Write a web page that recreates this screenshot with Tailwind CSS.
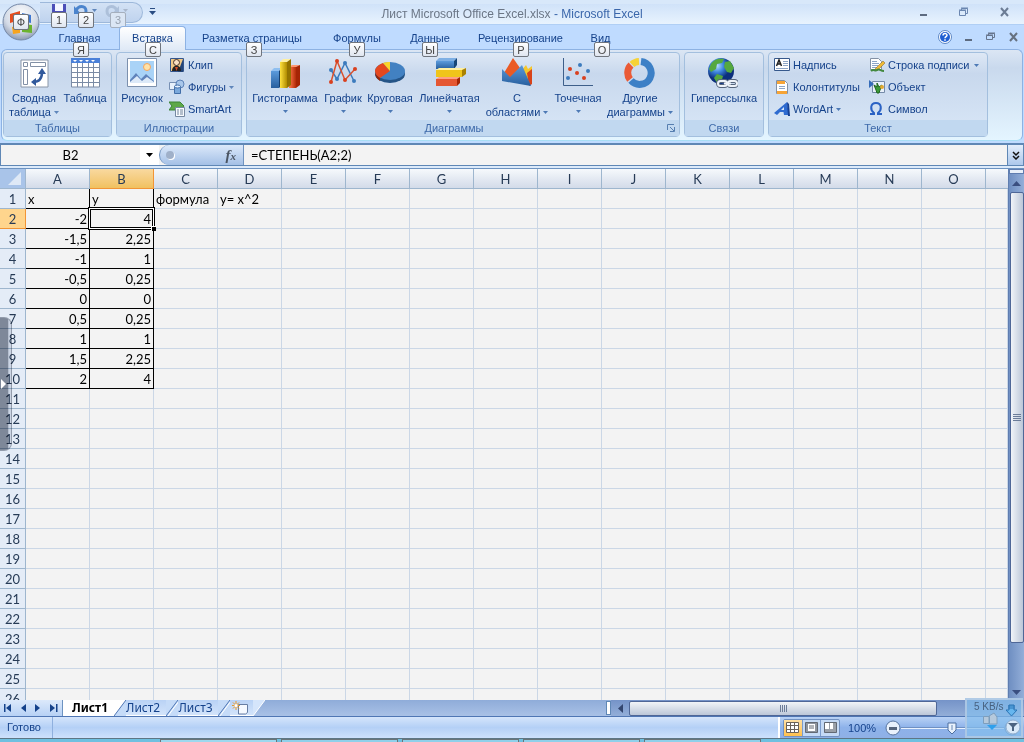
<!DOCTYPE html>
<html lang="ru">
<head>
<meta charset="utf-8">
<title>Лист Microsoft Office Excel.xlsx - Microsoft Excel</title>
<script src="https://cdn.jsdelivr.net/npm/@tailwindcss/browser@4"></script>
</head>
<body class="relative flex h-screen flex-col overflow-hidden bg-[#bfdbff] font-['Liberation_Sans',sans-serif] text-[11px] leading-[14px] text-[#15428b]">

<svg class="absolute h-0 w-0">
  <defs>
    <linearGradient id="blue" x2="1"><stop stop-color="#6aa5dd"/><stop offset="1" stop-color="#244f83"/></linearGradient>
    <linearGradient id="blueV" x2="0" y2="1"><stop stop-color="#5b9bdc"/><stop offset="1" stop-color="#285f9e"/></linearGradient>
    <linearGradient id="yel" x2="1"><stop stop-color="#ffe23f"/><stop offset="1" stop-color="#b08c00"/></linearGradient>
    <linearGradient id="red" x2="1"><stop stop-color="#ff7a4d"/><stop offset="1" stop-color="#b32c09"/></linearGradient>
    <radialGradient id="globe" cx=".35" cy=".3"><stop stop-color="#b8e0ff"/><stop offset=".5" stop-color="#3d86dd"/><stop offset="1" stop-color="#0c2f7d"/></radialGradient>
    <radialGradient id="orb" cx=".5" cy=".3" r=".75"><stop stop-color="#fff"/><stop offset=".6" stop-color="#d3dae6"/><stop offset="1" stop-color="#7f8ea8"/></radialGradient>
  </defs>
</svg>

<!-- Title bar -->
<header class="relative flex h-[25px] shrink-0 items-center border-b border-[#b0cff5] bg-linear-to-b from-[#cbdff8] to-[#e8f3fe] shadow-[inset_0_4px_0_#d8e8fa]">
  <nav class="relative ml-10 mb-px flex h-[21px] w-[103px] items-center self-end rounded-r-full border border-l-0 border-[#9db8da] bg-linear-to-b from-[#d3e2f5] to-[#bfd3ee]">
    <button aria-label="Сохранить" class="ml-3 mb-1"><svg width="14" height="14"><path d="M0 0h14v14H0z" fill="#4c4fb8"/><path d="M3 0h8v7H3z" fill="#f4f6ff"/><path d="M3 9h8v5H3z" fill="#cfd5ef"/></svg></button>
    <button aria-label="Отменить" class="ml-2 mb-1 flex items-center gap-1"><svg width="14" height="13"><path d="M2 7C4 1 12 1 12 7c0 3-2 5-4 5" fill="none" stroke="#4b84cd" stroke-width="3"/><path d="M0 2v8h7z" fill="#4b84cd"/></svg><svg width="5" height="3"><path d="M0 0h5L2.500 3z" fill="#5f86bb"/></svg></button>
    <button aria-label="Вернуть" class="ml-2 mb-1 flex items-center gap-1"><svg width="14" height="13"><path d="M12 7C10 1 2 1 2 7c0 3 2 5 4 5" fill="none" stroke="#adc0da" stroke-width="3"/><path d="M14 2v8H7z" fill="#adc0da"/></svg><svg width="5" height="3"><path d="M0 0h5L2.500 3z" fill="#aab8cc"/></svg></button>
    <kbd class="absolute left-[11px] top-[9px] h-4 w-4 rounded-xs border border-[#70757d] bg-linear-to-b from-white to-[#e0e6f0] text-center font-['Liberation_Sans'] text-[11px] leading-[15px] text-[#444]">1</kbd>
    <kbd class="absolute left-[38px] top-[9px] h-4 w-4 rounded-xs border border-[#70757d] bg-linear-to-b from-white to-[#e0e6f0] text-center font-['Liberation_Sans'] text-[11px] leading-[15px] text-[#444]">2</kbd>
    <kbd class="absolute left-[70px] top-[9px] h-4 w-4 rounded-xs border border-[#a5afbd] bg-[#dbe6f4] text-center font-['Liberation_Sans'] text-[11px] leading-[15px] text-[#98a2b0]">3</kbd>
  </nav>
  <button aria-label="Настройка панели быстрого доступа" class="ml-[6px]"><svg width="7" height="8"><path d="M1 0h5v1H1zM0 3h7L3.500 7z" fill="#2a4d83"/></svg></button>
  <h1 class="absolute inset-x-0 top-[6px] text-center text-[12px] leading-4 text-[#3a66aa]"><span class="text-[#6b7686]">Лист Microsoft Office Excel.xlsx</span> - Microsoft Excel</h1>
  <div class="ml-auto mr-[15px] flex items-center gap-[31px] text-[#5d6b80]">
    <button aria-label="Свернуть"><svg width="8" height="10"><path d="M0 7h7v2H0z" fill="currentColor"/></svg></button>
    <button aria-label="Восстановить"><svg width="10" height="10" fill="none" stroke="#6b86b0"><path d="M.500 3.500h6v5h-6zM2.500 3V1.500h6v5H7M0 3h7M2 1h7"/></svg></button>
    <button aria-label="Закрыть"><svg width="9" height="10"><path d="M1 1l7 8M8 1L1 9" stroke="#6b7c95" stroke-width="2"/></svg></button>
  </div>
</header>

<!-- Ribbon tabs -->
<div class="flex h-6 shrink-0 items-stretch">
  <nav class="flex pl-10 text-center leading-[27px]">
    <a href="#" class="relative w-[79px]">Главная<kbd class="absolute left-[33px] top-[17px] z-20 h-[15px] w-4 rounded-xs border border-[#70757d] bg-linear-to-b from-white to-[#e0e6f0] font-['Liberation_Sans'] text-[11px] leading-[14px] text-[#444]">Я</kbd></a>
    <a href="#" class="relative top-px z-10 w-[67px] rounded-t-sm border border-b-0 border-[#8db2e3] bg-linear-to-b from-white to-[#dfe9f6] leading-[23px]">Вставка<kbd class="absolute left-[25px] top-[15px] z-20 h-[15px] w-4 rounded-xs border border-[#70757d] bg-linear-to-b from-white to-[#e0e6f0] font-['Liberation_Sans'] text-[11px] leading-[14px] text-[#444]">С</kbd></a>
    <a href="#" class="relative w-[132px]">Разметка страницы<kbd class="absolute left-[60px] top-[17px] z-20 h-[15px] w-4 rounded-xs border border-[#70757d] bg-linear-to-b from-white to-[#e0e6f0] font-['Liberation_Sans'] text-[11px] leading-[14px] text-[#444]">З</kbd></a>
    <a href="#" class="relative w-[78px]">Формулы<kbd class="absolute left-[31px] top-[17px] z-20 h-[15px] w-4 rounded-xs border border-[#70757d] bg-linear-to-b from-white to-[#e0e6f0] font-['Liberation_Sans'] text-[11px] leading-[14px] text-[#444]">У</kbd></a>
    <a href="#" class="relative w-[68px]">Данные<kbd class="absolute left-[26px] top-[17px] z-20 h-[15px] w-4 rounded-xs border border-[#70757d] bg-linear-to-b from-white to-[#e0e6f0] font-['Liberation_Sans'] text-[11px] leading-[14px] text-[#444]">Ы</kbd></a>
    <a href="#" class="relative w-[113px]">Рецензирование<kbd class="absolute left-[49px] top-[17px] z-20 h-[15px] w-4 rounded-xs border border-[#70757d] bg-linear-to-b from-white to-[#e0e6f0] font-['Liberation_Sans'] text-[11px] leading-[14px] text-[#444]">Р</kbd></a>
    <a href="#" class="relative w-[47px]">Вид<kbd class="absolute left-[17px] top-[17px] z-20 h-[15px] w-4 rounded-xs border border-[#70757d] bg-linear-to-b from-white to-[#e0e6f0] font-['Liberation_Sans'] text-[11px] leading-[14px] text-[#444]">О</kbd></a>
  </nav>
  <div class="ml-auto mr-[6px] flex items-center gap-[13px]">
    <button aria-label="Справка"><svg width="14" height="14"><circle cx="7" cy="7" r="6.500" fill="#fff" stroke="#5c86c4"/><circle cx="7" cy="7" r="5" fill="#1f5fd2"/><path d="M5 5.500c0-2.500 4-2.500 4-.2C9 6.700 7 6.700 7 8.300M7 9.300v1.500" fill="none" stroke="#fff" stroke-width="1.500"/></svg></button>
    <button aria-label="Свернуть окно"><svg width="8" height="10"><path d="M0 7h7v2H0z" fill="#5d6b80"/></svg></button>
    <button aria-label="Восстановить окно"><svg width="10" height="10" fill="none" stroke="#66758c"><path d="M.500 3.500h6v4h-6zM2.500 3V1.500h6v4H7M0 3h7M2 1h7"/></svg></button>
    <button aria-label="Закрыть окно"><svg width="9" height="10"><path d="M1 1l7 8M8 1L1 9" stroke="#66717f" stroke-width="2"/></svg></button>
  </div>
</div>

<!-- Ribbon -->
<section class="mx-px flex h-[92px] shrink-0 gap-1 rounded-md border border-[#8db2e3] border-b-[#a7def5] bg-linear-to-b from-[#dbe6f4] from-0% via-[#c9d9ed] via-20% to-[#e4f5ff] px-px pb-[3px] pt-[2px]">
  <fieldset class="flex w-[109px] flex-col rounded-sm border border-[#a3bfde] bg-linear-to-b from-[#dee8f5] from-0% via-[#c8d8ed] via-25% to-[#d9e7f7]">
    <div class="flex min-h-0 flex-1 pt-[2px]">
      <button class="flex w-[60px] flex-col items-center"><svg class="shrink-0" width="32" height="36" viewBox="0 0 32 36"><path d="M3 5h27v27H3z" fill="#fff" stroke="#8996a8"/><path d="M5.500 7.500h4v4h-4zM12.500 7.500h15v4h-15zM5.500 14.500h4v15h-4z" fill="#fff" stroke="#8290a5"/><path d="M15 27c6 0 9-3 9-10" fill="none" stroke="#31599c" stroke-width="2.500"/><path d="M13 27l5-4v8zM24 13l-4 6h8z" fill="#31599c"/></svg><span>Сводная</span><span class="flex items-center gap-[3px]">таблица<svg width="5" height="3"><path d="M0 0h5L2.500 3z" fill="#5f86bb"/></svg></span></button>
      <button class="flex w-[42px] flex-col items-center"><svg class="shrink-0" width="32" height="36" viewBox="0 0 32 36"><path d="M2 3h29v29H2z" fill="#fff"/><path d="M2 3h29v5H2z" fill="#4a80d8"/><path d="M4 5h4l-2 2zM10 5h4l-2 2zM16 5h4l-2 2zM22 5h4l-2 2z" fill="#fff"/><path d="M2.500 8v24h28V8M2 12.500h29M2 17.500h29M2 22.500h29M2 27.500h29M8.500 8v24M13.500 8v24M19.500 8v24M24.500 8v24" fill="none" stroke="#7a8ba5"/></svg><span>Таблица</span></button>
    </div>
    <div class="h-4 shrink-0 bg-[#c1d8f0] text-center leading-[17px] text-[#3e6aaa]">Таблицы</div>
  </fieldset>
  <fieldset class="flex w-[126px] flex-col rounded-sm border border-[#a3bfde] bg-linear-to-b from-[#dee8f5] from-0% via-[#c8d8ed] via-25% to-[#d9e7f7]">
    <div class="flex min-h-0 flex-1">
      <button class="flex w-[50px] flex-col items-center pt-[2px]"><svg class="shrink-0" width="32" height="36" viewBox="0 0 32 36"><path d="M1.500 3.500h29v28h-29z" fill="#fff" stroke="#7c90ad"/><path d="M4 6h24v21H4z" fill="#a9d3f7"/><circle cx="21" cy="12" r="3.500" fill="#ffe2a8" stroke="#f3a65e"/><path d="M4 25l6-7 5 6 5-5 8 7v2H4z" fill="#5f83bb"/><path d="M4 27l7-6 5 5 5-4 7 5v1H4z" fill="#dce9f8"/></svg><span>Рисунок</span></button>
      <div class="flex flex-col pl-[2px] pt-px">
        <button class="flex h-[22px] items-center gap-[3px]"><svg width="16" height="16"><path d="M1.500 1.500h13v13h-13z" fill="#f0c988" stroke="#34568e"/><path d="M14 2v13H9z" fill="#244579"/><circle cx="7.500" cy="5.500" r="3" fill="#fbe0c2" stroke="#473027"/><path d="M3 14c0-7 9-7 9 0z" fill="#232323"/><path d="M6 10h3l-1.500 4z" fill="#d84d28"/></svg>Клип</button>
        <button class="flex h-[22px] items-center gap-[3px]"><svg width="16" height="16"><path d="M.500 3.500h8v7h-8z" fill="#e8f1fb" stroke="#7790b4"/><circle cx="11" cy="5" r="4" fill="#a9c7ea" stroke="#5d83b8"/><path d="M5.500 7.500h6v7h-6z" fill="#7ba9dc" stroke="#426ea8"/><ellipse cx="8.500" cy="7.500" rx="3" ry="1.500" fill="#e3f0ff" stroke="#426ea8"/></svg>Фигуры<svg width="5" height="3"><path d="M0 0h5L2.500 3z" fill="#5f86bb"/></svg></button>
        <button class="flex h-[22px] items-center gap-[3px]"><svg width="16" height="16"><path d="M0 1h11l4 4-3 4H0l3-4z" fill="#5ea849" stroke="#3c8438"/><path d="M6.500 6.500h9v9h-9z" fill="#f8fafd" stroke="#7688a1"/><path d="M8 9h2M11 9h3M8 11h2M11 11h3M8 13h2M11 13h3" stroke="#71849d"/></svg>SmartArt</button>
      </div>
    </div>
    <div class="h-4 shrink-0 bg-[#c1d8f0] text-center leading-[17px] text-[#3e6aaa]">Иллюстрации</div>
  </fieldset>
  <fieldset class="relative flex w-[434px] flex-col rounded-sm border border-[#a3bfde] bg-linear-to-b from-[#dee8f5] from-0% via-[#c8d8ed] via-25% to-[#d9e7f7]">
    <div class="flex min-h-0 flex-1 pl-[2px] pt-[2px]">
      <button class="flex w-[72px] flex-col items-center"><svg class="shrink-0" width="32" height="36" viewBox="0 0 32 36"><path d="M2 16h8v17H2z" fill="url(#blueV)"/><path d="M2 16l3-3h8l-3 3z" fill="#8fbff0"/><path d="M10 16l3-3v17l-3 3z" fill="#17406f"/><path d="M20 12h7v21h-7z" fill="url(#red)"/><path d="M20 12l3-2h8l-4 2z" fill="#ff9570"/><path d="M27 12l4-2v20l-4 3z" fill="#a52505"/><path d="M11 7h7v26h-7z" fill="url(#yel)"/><path d="M11 7l3-3h8l-4 3z" fill="#fff0a0"/><path d="M18 7l4-3v26l-4 3z" fill="#937300"/></svg><span>Гистограмма</span><svg class="mt-[5px]" width="5" height="3"><path d="M0 0h5L2.500 3z" fill="#4d79b5"/></svg></button>
      <button class="flex w-[44px] flex-col items-center"><svg class="shrink-0" width="32" height="36" viewBox="0 0 32 36"><path d="M4 15l6 9 8-16 9 18" fill="none" stroke="#3c7bbd" stroke-width="1.500"/><path d="M4 27l6-21 8 19L28 14" fill="none" stroke="#d9512f" stroke-width="1.500"/><g fill="#3c7bbd"><circle cx="4" cy="15" r="2"/><circle cx="10" cy="24" r="2"/><circle cx="18" cy="8" r="2"/><circle cx="27" cy="26" r="2"/></g><g fill="#d9401f"><circle cx="4" cy="27" r="2"/><circle cx="10" cy="6" r="2"/><circle cx="18" cy="25" r="2"/><circle cx="28" cy="14" r="2"/></g></svg><span>График</span><svg class="mt-[5px]" width="5" height="3"><path d="M0 0h5L2.500 3z" fill="#4d79b5"/></svg></button>
      <button class="flex w-[50px] flex-col items-center"><svg class="shrink-0" width="32" height="36" viewBox="0 0 32 36"><ellipse cx="16" cy="19" rx="15" ry="9" fill="#245487"/><ellipse cx="16" cy="16" rx="15" ry="9" fill="#4281c2"/><path d="M16 16L6 23C3 21 1 19 1 16c0-3 3-6 8-8z" fill="#e5481f"/><path d="M1 16c0 4 1 7 5 10v-3c-4-3-5-4-5-7z" fill="#9b2405"/><path d="M16 16L9 8c2-1 4-1 7-1z" fill="#fbd52b"/></svg><span>Круговая</span><svg class="mt-[5px]" width="5" height="3"><path d="M0 0h5L2.500 3z" fill="#4d79b5"/></svg></button>
      <button class="flex w-[69px] flex-col items-center"><svg class="shrink-0" width="32" height="36" viewBox="0 0 32 36"><path d="M2 6h18v8H2z" fill="url(#blueV)"/><path d="M2 6l3-3h18l-3 3z" fill="#7fb0e4"/><path d="M20 6l3-3v7l-3 4z" fill="#174678"/><path d="M2 24h21v7H2z" fill="#e55732"/><path d="M2 24l3-2h21l-3 2z" fill="#ffa080"/><path d="M23 24l3-2v6l-3 3z" fill="#a32505"/><path d="M2 15h26v7H2z" fill="#f0c51a"/><path d="M2 15l3-2h27l-4 2z" fill="#fff0a0"/><path d="M28 15l4-2v6l-4 3z" fill="#a98100"/></svg><span>Линейчатая</span><svg class="mt-[5px]" width="5" height="3"><path d="M0 0h5L2.500 3z" fill="#4d79b5"/></svg></button>
      <button class="flex w-[66px] flex-col items-center"><svg class="shrink-0" width="32" height="36" viewBox="0 0 32 36"><path d="M20 16l5-6 2 4 4-3v18H20z" fill="#f5c72c"/><path d="M26 18l5-4v15l-3 2z" fill="#d8431a"/><path d="M3 18l9-15 7 10 4 7v6H7z" fill="#ea5a25"/><path d="M1 14l8 8 12-12 9 21-29-5z" fill="url(#blueV)"/></svg><span>С</span><span class="flex items-center gap-[3px]">областями<svg width="5" height="3"><path d="M0 0h5L2.500 3z" fill="#4d79b5"/></svg></span></button>
      <button class="flex w-[56px] flex-col items-center"><svg class="shrink-0" width="32" height="36" viewBox="0 0 32 36"><path d="M1.500 3v27.500H31" fill="none" stroke="#3e5f8a"/><g fill="#d9401f"><circle cx="8" cy="14" r="2"/><circle cx="15" cy="18" r="2"/><circle cx="22" cy="23" r="2"/></g><g fill="#3c7bbd"><circle cx="18" cy="10" r="2"/><circle cx="26" cy="16" r="2"/><circle cx="6" cy="23" r="2"/></g></svg><span>Точечная</span><svg class="mt-[5px]" width="5" height="3"><path d="M0 0h5L2.500 3z" fill="#4d79b5"/></svg></button>
      <button class="flex w-[68px] flex-col items-center"><svg class="shrink-0" width="32" height="36" viewBox="0 0 32 36" fill="none" stroke-width="7"><path d="M17 6.500A11.500 11.500 0 1 1 7 25.500" stroke="#3d80c6"/><path d="M6 24.500A11 11 0 0 1 7 10" stroke="#ea5a36"/><path d="M8 9.500A11 11 0 0 1 15 6.500" stroke="#f6d236"/></svg><span>Другие</span><span class="flex items-center gap-[3px]">диаграммы<svg width="5" height="3"><path d="M0 0h5L2.500 3z" fill="#4d79b5"/></svg></span></button>
    </div>
    <div class="h-4 shrink-0 bg-[#c1d8f0] pr-[18px] text-center leading-[17px] text-[#3e6aaa]">Диаграммы</div>
    <button aria-label="Вставка диаграммы" class="absolute bottom-1 right-1"><svg width="8" height="8" fill="none" stroke="#567eb0"><path d="M.500 6V.500H7M3 3l4 4M7.500 3v4.500H3"/></svg></button>
  </fieldset>
  <fieldset class="flex w-[80px] flex-col rounded-sm border border-[#a3bfde] bg-linear-to-b from-[#dee8f5] from-0% via-[#c8d8ed] via-25% to-[#d9e7f7]">
    <div class="flex min-h-0 flex-1 justify-center pt-[2px]">
      <button class="flex flex-col items-center"><svg class="-ml-1 shrink-0" width="32" height="36" viewBox="0 0 32 36"><circle cx="15" cy="16" r="13" fill="url(#globe)"/><path d="M5 9C8 4 13 3 18 4l-2 4-5 1-1 5-5 3-2-3zM19 7l5-1 4 7-3 5-4-1-3-5zM11 19l6 2-2 7h-4l-3-5z" fill="#55a83f"/><g fill="none" stroke="#56657c" stroke-width="4"><rect x="12" y="26" width="9" height="5" rx="2.500"/><rect x="22" y="26" width="9" height="5" rx="2.500"/></g><g fill="none" stroke="#eef3fa" stroke-width="2"><rect x="12" y="26" width="9" height="5" rx="2.500"/><rect x="22" y="26" width="9" height="5" rx="2.500"/><path d="M18 28.500h7"/></g></svg><span>Гиперссылка</span></button>
    </div>
    <div class="h-4 shrink-0 bg-[#c1d8f0] text-center leading-[17px] text-[#3e6aaa]">Связи</div>
  </fieldset>
  <fieldset class="flex w-[220px] flex-col rounded-sm border border-[#a3bfde] bg-linear-to-b from-[#dee8f5] from-0% via-[#c8d8ed] via-25% to-[#d9e7f7]">
    <div class="flex min-h-0 flex-1 gap-[7px] pl-[5px] pt-px">
      <div class="flex w-[88px] flex-col">
        <button class="flex h-[22px] items-center gap-[3px]"><svg width="16" height="16" viewBox="0 0 16 16"><path d="M.500 1.500h15v12H.500z" fill="#fff" stroke="#36588c"/><path d="M2.500 9L5 3l2.500 6M3.500 7h3" fill="none" stroke="#222" stroke-width="1.500"/><path d="M9 4.500h5M9 6.500h5M9 8.500h5M2 11.500h12" stroke="#8da5c6"/></svg>Надпись</button>
        <button class="flex h-[22px] items-center gap-[3px] whitespace-nowrap"><svg class="shrink-0" width="16" height="16"><path d="M2.500 1.500h8l3 3v10h-11z" fill="#fff" stroke="#8391a5"/><path d="M3 2h8v3H3zM3 12h10v3H3z" fill="#f6a436"/><path d="M5 7.500h6M5 9.500h6" stroke="#8da5c6"/></svg>Колонтитулы</button>
        <button class="flex h-[22px] items-center gap-[3px]"><svg width="16" height="16"><path d="M0 12L13 1l2 13h-5l-.5-3H6l-3 3z" fill="#2f6bd0"/><path d="M7 9l3-3v3z" fill="#d8e7fb"/><path d="M13 1l2 2 1 12h-2z" fill="#153f93"/></svg>WordArt<svg width="5" height="3"><path d="M0 0h5L2.500 3z" fill="#4d79b5"/></svg></button>
      </div>
      <div class="flex flex-col">
        <button class="flex h-[22px] items-center gap-[3px] whitespace-nowrap"><svg width="16" height="16"><path d="M1.500 1.500h8l3 3v8h-11z" fill="#fff" stroke="#8391a5"/><path d="M3 4.500h5M3 6.500h7M3 8.500h6M3 10.500h5" stroke="#8da5c6"/><path d="M6 12l8-8 2 2-8 8z" fill="#f0ba35" stroke="#7b5f28" stroke-width=".5"/><path d="M2 14c3-3 4 1 6-1s3 1 7 1" fill="none" stroke="#42883f" stroke-width="2"/></svg>Строка подписи<svg class="ml-[2px]" width="5" height="3"><path d="M0 0h5L2.500 3z" fill="#4d79b5"/></svg></button>
        <button class="flex h-[22px] items-center gap-[3px]"><svg width="16" height="16"><path d="M3.500 2.500h12v11h-12z" fill="#e8f0fa" stroke="#748ba9"/><path d="M0 1v8l5-4z" fill="#356cb9"/><path d="M5 6l3 2V4l2 4 3-2-2 5-1 3H8l-1-3z" fill="#3b9a38" stroke="#20651f"/><circle cx="13" cy="8" r="2" fill="#e3a931"/></svg>Объект</button>
        <button class="flex h-[22px] items-center gap-[3px]"><svg width="16" height="16"><path d="M1 13h4v-1C1 9 1 2 7 2s6 7 2 10v1h4" fill="none" stroke="#2b62c4" stroke-width="2"/></svg>Символ</button>
      </div>
    </div>
    <div class="h-4 shrink-0 bg-[#c1d8f0] text-center leading-[17px] text-[#3e6aaa]">Текст</div>
  </fieldset>
</section>

<!-- Formula bar -->
<div class="mt-[2px] flex h-[23px] shrink-0 border border-t-2 border-[#5f87b5] bg-[#f3f3f3] text-black">
  <input aria-label="Имя" value="B2" class="w-[139px] bg-[#f3f3f3] text-center font-['Lato',sans-serif] text-[13px] outline-none">
  <button aria-label="Список имён" class="flex w-[19px] items-center justify-center bg-white"><svg width="7" height="4"><path d="M0 0h7L3.500 4z"/></svg></button>
  <div class="flex w-[85px] items-center justify-between rounded-l-full border-l border-r border-[#6f93c0] bg-linear-to-b from-[#dce9fa] to-[#a4c0e6] pl-[6px] pr-[7px]">
    <span class="h-2 w-2 rounded-full bg-[#9fb0c9] shadow-[1px_1px_0_#fff]"></span>
    <button class="font-['Liberation_Serif',serif] text-[15px] font-bold italic text-[#4b5563]">f<span class="text-[11px]">x</span></button>
  </div>
  <input aria-label="Строка формул" value="=СТЕПЕНЬ(A2;2)" class="min-w-0 flex-1 bg-[#f3f3f3] pl-[7px] font-['Lato',sans-serif] text-[13px] outline-none">
  <button aria-label="Развернуть строку формул" class="flex w-4 items-center justify-center border-l border-[#5f87b5] bg-linear-to-b from-[#e3eefc] to-[#adc8eb]"><svg width="8" height="9" fill="none" stroke="#111" stroke-width="1.500"><path d="M1 1l3 3 3-3M1 5l3 3 3-3"/></svg></button>
</div>
<div class="h-[3px] shrink-0 border-b border-[#6d93c1] bg-[#dceafa]"></div>

<!-- Worksheet -->
<main class="flex min-h-0 flex-1">
  <div class="min-w-0 flex-1 overflow-hidden bg-[#f3f3f3]">
    <table class="w-full table-fixed border-separate border-spacing-0 font-['Lato',sans-serif] text-[13px] leading-[18px] text-black">
      <colgroup id="cols"></colgroup>
      <thead id="head"></thead>
      <tbody id="body"></tbody>
    </table>
  </div>
  <div class="flex w-4 shrink-0 flex-col items-center border-l border-[#5f7db0] bg-linear-to-r from-[#6f8fc2] to-[#93aed8]">
    <div class="h-[5px] w-full border border-[#5f7db0] bg-[#e8f0fa]"></div>
    <button aria-label="Вверх" class="flex h-[18px] items-center"><svg width="9" height="5"><path d="M0 5h9L4.500 0z" fill="#3a4f80"/></svg></button>
    <div class="flex h-[451px] w-[14px] shrink flex-col items-center justify-center gap-px rounded-xs border border-[#4f6797] bg-linear-to-r from-[#f1f4f8] to-[#bcc7d8]">
      <i class="h-px w-2 bg-[#6b7c99]"></i><i class="h-px w-2 bg-[#6b7c99]"></i><i class="h-px w-2 bg-[#6b7c99]"></i><i class="h-px w-2 bg-[#6b7c99]"></i>
    </div>
    <button aria-label="Вниз" class="mt-auto flex h-4 items-center"><svg width="9" height="5"><path d="M0 0h9L4.500 5z" fill="#3a4f80"/></svg></button>
  </div>
</main>

<!-- Sheet tabs and horizontal scroll -->
<div class="flex h-[17px] shrink-0 border-b border-[#4f76b4] bg-linear-to-b from-[#8facd9] to-[#a9c1e6] font-['Noto_Sans',sans-serif] text-[12px] leading-[16px]">
  <div class="flex w-[62px] items-center justify-around bg-linear-to-b from-[#dce9fb] to-[#b7d1f5] text-[#15428b]">
    <button aria-label="Первый лист"><svg width="8" height="8" fill="currentColor"><path d="M0 0h1.500v8H0zM7 0v8L2 4z"/></svg></button>
    <button aria-label="Предыдущий лист"><svg width="6" height="8" fill="currentColor"><path d="M5 0v8L0 4z"/></svg></button>
    <button aria-label="Следующий лист"><svg width="6" height="8" fill="currentColor"><path d="M0 0v8l5-4z"/></svg></button>
    <button aria-label="Последний лист"><svg width="8" height="8" fill="currentColor"><path d="M0 0v8l5-4zM6 0h1.500v8H6z"/></svg></button>
  </div>
  <button class="w-[52px] border-l border-[#6d93c1] bg-white pl-[3px] font-bold text-black">Лист1</button>
  <svg width="12" height="16"><path d="M0 0h12v16H0z" fill="#c5dbf8"/><path d="M0 0h12L0 16z" fill="#fff"/><path d="M12 0L0 16" stroke="#4f76b4"/></svg>
  <button class="w-10 border-b border-white bg-linear-to-b from-[#b9d2f5] to-[#d3e4fb] pr-[6px]">Лист2</button>
  <svg width="12" height="16"><path d="M0 0h12v16H0z" fill="#c5dbf8"/><path d="M12 0L0 16" stroke="#4f76b4"/><path d="M13 1L2 16" stroke="#fff"/></svg>
  <button class="w-10 border-b border-white bg-linear-to-b from-[#b9d2f5] to-[#d3e4fb] pr-[5px]">Лист3</button>
  <svg width="12" height="16"><path d="M0 0h12v16H0z" fill="#c5dbf8"/><path d="M12 0L0 16" stroke="#4f76b4"/><path d="M13 1L2 16" stroke="#fff"/></svg>
  <button aria-label="Вставить лист" class="flex w-[23px] items-center border-b border-white bg-linear-to-b from-[#b9d2f5] to-[#d3e4fb] pl-[2px]"><svg width="17" height="14"><path d="M6.500 3.500h9v8l-2 1.500h-7z" fill="#f5f9ff" stroke="#667da3"/><path d="M4 0v9M0 4.500h8M1 1.500l6 6M7 1.500l-6 6" stroke="#e69a2c"/><circle cx="4" cy="4.500" r="1.500" fill="#fff"/></svg></button>
  <svg width="12" height="16"><path d="M0 0h12L0 16z" fill="#d5e5fb"/><path d="M12 0L0 16" stroke="#fff"/></svg>
  <div class="ml-auto flex w-[418px] items-center">
    <div class="h-[14px] w-[5px] border border-[#5f87b5] bg-white"></div>
    <div class="flex h-4 flex-1 items-center bg-linear-to-b from-[#7593c8] to-[#93aed8]">
      <button aria-label="Влево" class="flex w-[18px] justify-center"><svg width="5" height="9"><path d="M5 0v9L0 4.500z" fill="#33466f"/></svg></button>
      <div class="flex h-[15px] w-[308px] items-center justify-center gap-px rounded-xs border border-[#4f6797] bg-linear-to-b from-[#f1f4f8] to-[#bcc7d8]">
        <i class="h-[7px] w-px bg-[#6b7c99]"></i><i class="h-[7px] w-px bg-[#6b7c99]"></i><i class="h-[7px] w-px bg-[#6b7c99]"></i><i class="h-[7px] w-px bg-[#6b7c99]"></i>
      </div>
    </div>
  </div>
</div>

<!-- Status bar -->
<footer class="flex h-[21px] shrink-0 items-stretch bg-linear-to-b from-[#d5e5fb] from-0% via-[#b4d0f6] via-50% to-[#cde1fc]">
  <div class="w-[53px] border-r border-[#8fb0de] pl-[7px] leading-[21px]">Готово</div>
  <div class="ml-auto flex w-[246px] items-center border-l-2 border-white bg-linear-to-b from-[#b9d2f5] from-0% via-[#8db2ea] via-50% to-[#8fb0e6] pl-[3px]">
    <div class="flex h-[18px] w-[57px] divide-x divide-[#7c9ccc] rounded-xs border border-[#7191c2] bg-[#c5daf5]">
      <button aria-label="Обычный" class="flex flex-1 items-center justify-center bg-linear-to-b from-[#ffe0a3] to-[#ffc04a]"><svg width="13" height="11"><path d="M.500.500h12v10H.500z" fill="#fff"/><path d="M.500.500h12v10H.500zM0 3.500h13M0 7.500h13M4.500 0v11M8.500 0v11" fill="none" stroke="#6a625a"/></svg></button>
      <button aria-label="Разметка страницы" class="flex flex-1 items-center justify-center"><svg width="13" height="11"><path d="M.500.500h12v10H.500z" fill="#8e949d" stroke="#626973"/><path d="M3 2h7v7H3z" fill="#fff"/><path d="M4 4h5M4 6h5" stroke="#626973"/></svg></button>
      <button aria-label="Страничный режим" class="flex flex-1 items-center justify-center"><svg width="13" height="11"><path d="M.500.500h12v10H.500z" fill="#9aa0a8" stroke="#626973"/><path d="M1 1h4v6H1zM6 1h3v6H6z" fill="#fff"/></svg></button>
    </div>
    <span class="ml-[8px] w-[30px]">100%</span>
    <button aria-label="Уменьшить" class="ml-[7px]"><svg width="16" height="16"><circle cx="8" cy="8" r="7" fill="#e8f1fc" stroke="#57749f"/><path d="M4 7h8v3H4z" fill="#56657c"/></svg></button>
    <div class="relative h-4 flex-1"><div class="absolute inset-x-0 top-2 h-px bg-[#e9f2ff] shadow-[0_-1px_0_#6f90c2]"></div>
      <input aria-label="Масштаб" type="range" min="10" max="190" value="100" class="absolute inset-0 w-full opacity-0">
      <svg class="absolute left-1/2 top-[2px] -ml-[6px]" width="10" height="13"><path d="M1 1h8v7l-4 4-4-4z" fill="#e8f1fc" stroke="#4d6f9f"/><path d="M5 3v5" stroke="#6888b3"/></svg></div>
    <button aria-label="Увеличить" class="mr-1"><svg width="16" height="16"><circle cx="8" cy="8" r="7" fill="#e8f1fc" stroke="#57749f"/><path d="M4 7h8v2H4zM7 4h2v8H7z" fill="#56657c"/></svg></button>
  </div>
</footer>

<!-- Top edge of the taskbar -->
<div class="flex h-1 shrink-0 gap-1 border-t border-[#5d7685] bg-[#6fc0e0] pl-[160px]">
  <span class="w-[117px] border border-b-0 border-[#6a7478] bg-[#9dd8ee]"></span><span class="w-[117px] border border-b-0 border-[#6a7478] bg-[#8fd0ea]"></span><span class="w-[117px] border border-b-0 border-[#6a7478] bg-[#8fd0ea]"></span><span class="w-[117px] border border-b-0 border-[#6a7478] bg-[#8fd0ea]"></span><span class="w-[117px] border border-b-0 border-[#6a7478] bg-[#8fd0ea]"></span>
</div>

<!-- Office button -->
<button aria-label="Office" class="absolute left-[2px] top-[3px] z-30"><svg width="38" height="38"><circle cx="19" cy="19" r="18" fill="url(#orb)" stroke="#7689a8"/><path d="M8 11l10-3v9l-10 3z" fill="#e54d1e"/><path d="M10 24l8-2v8l-7 1z" fill="#f8a41d"/><path d="M20 10l9 2v8l-9-2z" fill="#3e78d2"/><path d="M20 21l10 1v8l-10-1z" fill="#6bb32f"/></svg>
  <kbd class="absolute left-[11px] top-[11px] h-4 w-4 rounded-xs border border-[#70757d] bg-linear-to-b from-white to-[#e0e6f0] text-center font-['Liberation_Sans'] text-[11px] leading-[15px] text-[#444]">Ф</kbd></button>

<!-- Side panel handle -->
<button aria-label="Показать панель" class="absolute left-0 top-[317px] h-[134px] w-3 mix-blend-multiply"><span class="block h-full rounded-r-lg border border-l-0 border-[#a4a9b2] bg-linear-to-r from-[#8d939e] from-70% to-[#e4e7ec] to-80%"></span></button>
<svg class="pointer-events-none absolute left-0 top-[379px]" width="6" height="10"><path d="M1 0v10l5-5z" fill="#fff"/></svg>

<!-- Download speed monitor -->
<aside class="absolute bottom-1 right-px h-10 w-[58px] border-2 border-[#b4cbe4]/80 bg-[#84bdec]/70 text-[10px] text-[#47617f]">
  <div class="flex items-start justify-between pl-[7px] pr-1"><span>5 KB/s</span><svg class="mt-1" width="11" height="13"><path d="M3 1h5v5h3l-5.500 6L0 6h3z" fill="#66b6ef" stroke="#2b75b5"/><path d="M2 2h7M2 4h7" stroke="#2b75b5"/></svg></div>
  <svg class="absolute left-[14px] top-[12px]" width="17" height="18"><path d="M2.500 4.500h6v7h-6zM8 4l5-3 3 4v7H8z" fill="#b5c9dc" stroke="#7d9ebd"/><path d="M6 13h10l-5 5z" fill="#2fa0ec"/></svg>
  <svg class="absolute bottom-px right-0" width="16" height="16"><circle cx="8" cy="8" r="7" fill="#d9e9f8" stroke="#8eacce"/><path d="M3 4h10l-4 4v4H7V8z" fill="#4d6480"/></svg>
</aside>

<script>
  const letters = 'ABCDEFGHIJKLMNO'.split('');
  const data = [['x','y','формула','y= x^2'],['-2','4'],['-1,5','2,25'],['-1','1'],['-0,5','0,25'],['0','0'],['0,5','0,25'],['1','1'],['1,5','2,25'],['2','4']];
  document.getElementById('cols').innerHTML = '<col class="w-[26px]">' + letters.map(() => '<col class="w-16">').join('') + '<col>';
  document.getElementById('head').innerHTML =
    '<tr class="h-5"><th class="border-b border-r border-[#9eb6ce] bg-[#a9c4e9] p-0"><svg class="ml-auto mr-1" width="13" height="13"><path d="M13 0v13H0z" fill="#dfe9f6"/></svg></th>' +
    letters.map(l => `<th scope="col" class="${l === 'B'
      ? 'border-b border-r border-[#f29536] bg-linear-to-b from-[#f9d99f] to-[#f1c15f] p-0 font-normal text-[#273b56]'
      : 'border-b border-r border-[#9eb6ce] bg-linear-to-b from-[#f6f9fc] to-[#d3dbe9] p-0 font-normal text-[#273b56]'}">${l}</th>`).join('') +
    '<th class="border-b border-[#9eb6ce] bg-linear-to-b from-[#f6f9fc] to-[#d3dbe9] p-0"></th></tr>';
  let rows = '';
  for (let r = 0; r < 26; r++) {
    rows += `<tr class="h-5"><th scope="row" class="${r === 1
      ? 'border-b border-r border-[#f29536] bg-[#ffd58d] p-0 font-normal text-[#273b56]'
      : 'border-b border-r border-[#9eb6ce] bg-[#e4ecf7] p-0 font-normal text-[#273b56]'}">${r + 1}</th>`;
    for (let c = 0; c < 16; c++) {
      const v = (data[r] || [])[c] || '';
      const selected = r === 1 && c === 1;
      const cls = r < 10 && c < 2
        ? (r === 0 ? 'border-b border-r border-black py-0 pl-[2px] pr-0 text-left' : 'relative border-b border-r border-black py-0 pl-0 pr-[2px] text-right')
        : 'overflow-visible whitespace-nowrap border-b border-r border-[#cbd7e6] py-0 pl-[2px] pr-0 text-left';
      rows += `<td class="${cls}">${v}${selected ? '<span class="absolute -inset-px z-10 border border-white shadow-[inset_0_0_0_1px_#000] outline-1 outline-black"></span><span class="absolute -bottom-[3px] -right-[3px] z-20 h-[5px] w-[5px] border-l border-t border-white bg-black"></span>' : ''}</td>`;
    }
    rows += '</tr>';
  }
  document.getElementById('body').innerHTML = rows;
</script>
</body>
</html>
